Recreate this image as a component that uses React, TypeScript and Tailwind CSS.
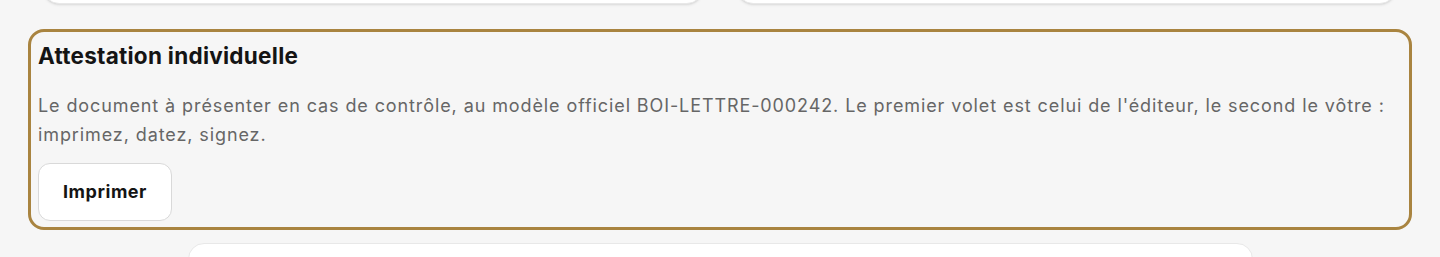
import React from 'react';

const font = { fontFamily: 'Inter, "Noto Sans", sans-serif' };

const App: React.FC = () => {
  const handlePrint = () => {
    window.print();
  };

  return (
    <div className="h-[257px] overflow-hidden bg-[#f6f6f6] px-[28px]" style={font}>
      {/* Previous row (cut off at the top) */}
      <div className="ml-[15px] mr-[16px] mt-[-36px] grid grid-cols-2 gap-[34px]">
        <div className="h-[40px] rounded-[16px] border border-[#e8e8e8] bg-white shadow-sm" />
        <div className="h-[40px] rounded-[16px] border border-[#e8e8e8] bg-white shadow-sm" />
      </div>

      {/* Attestation card */}
      <section className="mt-[25px] rounded-[16px] border-[3px] border-[#a98440] bg-[#f6f6f6] px-[7px] pb-[6px] pt-[10px]">
        <h2 className="text-[22.5px] font-bold leading-[28px] tracking-[0.012em] text-[#141414]">
          Attestation individuelle
        </h2>
        <p className="mt-[22px] text-[18px] leading-[1.6] tracking-[0.05em] text-[#666666]">
          Le document à présenter en cas de contrôle, au modèle officiel BOI-LETTRE-000242. Le premier volet est celui de
          l'éditeur, le second le vôtre : imprimez, datez, signez.
        </p>
        <button
          onClick={handlePrint}
          className="mt-[13px] h-[58px] w-[134px] rounded-[12px] border border-[#d9d9d9] bg-white text-[18px] font-bold tracking-[0.03em] text-[#141414]"
        >
          Imprimer
        </button>
      </section>

      {/* Next card (cut off at the bottom) */}
      <div className="mx-auto mt-[13px] h-[40px] w-[1065px] rounded-[16px] border border-[#e8e8e8] bg-white" />
    </div>
  );
};

export default App;
